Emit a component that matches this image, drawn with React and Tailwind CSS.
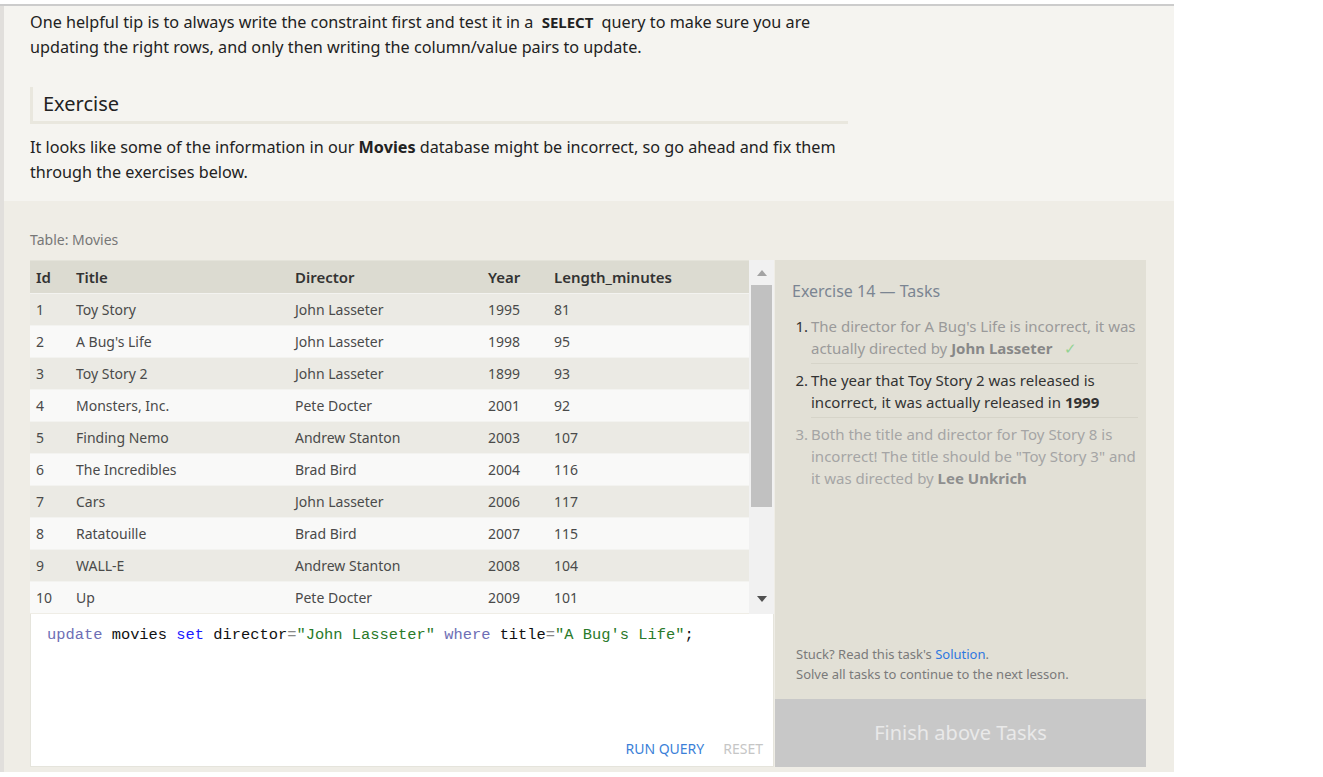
import React from 'react';

const movies = [
  [1, 'Toy Story', 'John Lasseter', 1995, 81],
  [2, "A Bug's Life", 'John Lasseter', 1998, 95],
  [3, 'Toy Story 2', 'John Lasseter', 1899, 93],
  [4, 'Monsters, Inc.', 'Pete Docter', 2001, 92],
  [5, 'Finding Nemo', 'Andrew Stanton', 2003, 107],
  [6, 'The Incredibles', 'Brad Bird', 2004, 116],
  [7, 'Cars', 'John Lasseter', 2006, 117],
  [8, 'Ratatouille', 'Brad Bird', 2007, 115],
  [9, 'WALL-E', 'Andrew Stanton', 2008, 104],
  [10, 'Up', 'Pete Docter', 2009, 101],
];

const cols = 'grid grid-cols-[40px_219px_193px_66px_1fr]';

const MovieTable = () => (
  <div className="flex h-[354px]">
    <div className="w-[719px] flex flex-col">
      <div className={`${cols} h-[33px] items-center bg-[#dcdbd1] border-t border-[#e4e3da] text-[15px] font-semibold text-[#333]`}>
        <div className="pl-[6px]">Id</div>
        <div className="pl-[6px]">Title</div>
        <div className="pl-[6px]">Director</div>
        <div className="pl-[6px]">Year</div>
        <div className="pl-[6px]">Length_minutes</div>
      </div>
      {movies.map((m, i) => (
        <div
          key={m[0]}
          className={`${cols} h-[32px] items-center text-[14px] text-[#4a4a4a] border-t border-[#f3f3f0] ${i % 2 === 0 ? 'bg-[#ebeae4]' : 'bg-[#f9f9f8]'}`}
        >
          {m.map((v, j) => (
            <div key={j} className="pl-[6px]">{v}</div>
          ))}
        </div>
      ))}
    </div>
    <div className="w-[25px] bg-[#f1f1f1] flex flex-col items-center">
      <div className="h-[25px] flex items-center justify-center">
        <svg width="10" height="6" viewBox="0 0 10 6"><path d="M5 0 L10 6 L0 6 Z" fill="#a3a3a3" /></svg>
      </div>
      <div className="w-[21px] h-[222px] bg-[#c1c1c1]" />
      <div className="flex-1" />
      <div className="h-[30px] flex items-center justify-center">
        <svg width="10" height="6" viewBox="0 0 10 6"><path d="M0 0 L10 0 L5 6 Z" fill="#505050" /></svg>
      </div>
    </div>
  </div>
);

const Editor = () => (
  <div className="h-[153px] bg-white border border-t-0 border-[#e5e4dc] flex flex-col">
    <pre className="pt-[9px] pl-[16px] text-[15.4px] leading-[24px] text-[#111]" style={{ fontFamily: '"Liberation Mono", monospace' }}>
      <span className="text-[#6e6eb5]">update</span> movies <span className="text-[#1a1aff]">set</span> director<span className="text-[#888]">=</span><span className="text-[#2a7a2a]">"John Lasseter"</span> <span className="text-[#6e6eb5]">where</span> title<span className="text-[#888]">=</span><span className="text-[#2a7a2a]">"A Bug's Life"</span>;
    </pre>
    <div className="flex-1" />
    <div className="flex justify-end gap-[19px] pr-[10px] pb-[7px] text-[14px] leading-[20px]">
      <span className="text-[#3b7fd8]">RUN QUERY</span>
      <span className="text-[#c6c6c6]">RESET</span>
    </div>
  </div>
);

const Task = ({ n, children, tone, last }) => (
  <li className="flex">
    <span className={`w-[19px] shrink-0 pt-[5px] pr-[3px] text-right ${n === 1 || n === 2 ? 'text-[#333]' : tone}`}>{n}.</span>
    <div className={`flex-1 pt-[5px] pb-[4px] ${last ? '' : 'border-b border-[#d6d4c9]'} ${tone}`}>{children}</div>
  </li>
);

const TasksPanel = () => (
  <div className="w-[371px] ml-[1px] bg-[#e2e0d6] flex flex-col">
    <div className="pt-[19px] pl-[17px] pr-[8px]">
      <h3 className="text-[16px] leading-[24px] text-[#7b8592]">Exercise 14 — Tasks</h3>
      <ol className="mt-[7px] text-[15px] leading-[22px]">
        <Task n={1} tone="text-[#9a9a9a]">
          The director for A Bug's Life is incorrect, it was actually directed by <b className="font-bold text-[#888]">John Lasseter</b>
          <span className="ml-[12px] text-[#93d393]">✓</span>
        </Task>
        <Task n={2} tone="text-[#333]">
          The year that Toy Story 2 was released is incorrect, it was actually released in <b className="font-bold">1999</b>
        </Task>
        <Task n={3} tone="text-[#a5a5a5]" last>
          Both the title and director for Toy Story 8 is incorrect! The title should be "Toy Story 3" and it was directed by <b className="font-bold text-[#8e8e8e]">Lee Unkrich</b>
        </Task>
      </ol>
    </div>
    <div className="flex-1" />
    <div className="pl-[21px] pb-[15px] text-[13px] leading-[20px] text-[#7a7a7a]">
      <p>Stuck? Read this task's <span className="text-[#2f78e0]">Solution</span>.</p>
      <p>Solve all tasks to continue to the next lesson.</p>
    </div>
    <div className="h-[68px] bg-[#c8c8c8] flex items-center justify-center text-[20px] text-[#e9e9e9]">
      Finish above Tasks
    </div>
  </div>
);

export default function App() {
  return (
    <div className="w-full h-[777px] bg-white overflow-hidden" style={{ fontFamily: '"Noto Sans", "Open Sans", sans-serif' }}>
      <div className="w-[1174px] mt-[4px] border-t-2 border-[#cccccc] flex">
        <div className="w-[4px] bg-[#e1dfdc]" />
        <div className="flex-1 flex flex-col">
          <section className="bg-[#f5f4f0] pt-[4px] pb-[16px] pl-[26px] text-[16.2px] leading-[25px] text-[#222]">
            <p className="w-[800px]">
              One helpful tip is to always write the constraint first and test it in a <b className="font-bold text-[15px] mx-[4px]">SELECT</b> query to make sure you are updating the right rows, and only then writing the column/value pairs to update.
            </p>
            <div className="mt-[27px] w-[818px] h-[37px] border-l-[3px] border-b-[3px] border-[#e9e7de] flex items-center pl-[10px]">
              <h2 className="text-[20px] text-[#222] -mt-[1px]">Exercise</h2>
            </div>
            <p className="mt-[11px] w-[820px]">
              It looks like some of the information in our <b className="font-bold">Movies</b> database might be incorrect, so go ahead and fix them through the exercises below.
            </p>
          </section>
          <section className="bg-[#efede6] pt-[29px] pl-[26px] pr-[28px] pb-[5px]">
            <div className="text-[14px] leading-[20px] text-[#777] mb-[10px]">Table: Movies</div>
            <div className="flex">
              <div className="w-[744px]">
                <MovieTable />
                <Editor />
              </div>
              <TasksPanel />
            </div>
          </section>
        </div>
      </div>
    </div>
  );
}
